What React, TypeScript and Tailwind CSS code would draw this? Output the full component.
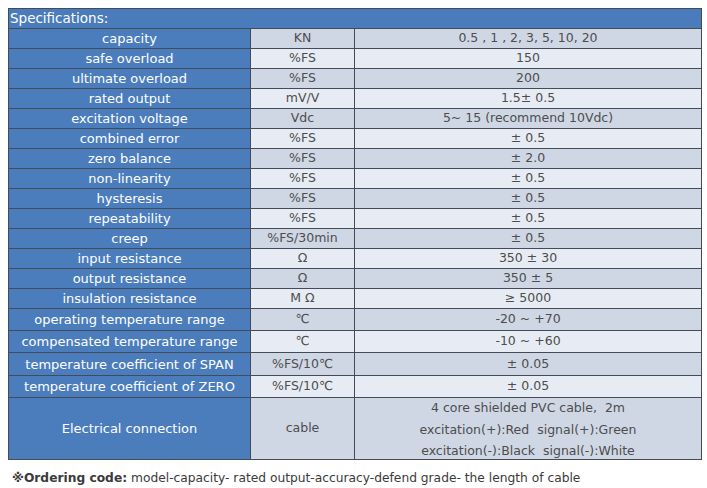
import React from 'react';

type Row = { name: string; unit: string; value: string; h: string; light: boolean };

const rows: Row[] = [
  { name: 'capacity', unit: 'KN', value: '0.5 , 1 , 2, 3, 5, 10, 20', h: 'h-[19px]', light: false },
  { name: 'safe overload', unit: '%FS', value: '150', h: 'h-[19px]', light: true },
  { name: 'ultimate overload', unit: '%FS', value: '200', h: 'h-[19px]', light: false },
  { name: 'rated output', unit: 'mV/V', value: '1.5± 0.5', h: 'h-[19px]', light: true },
  { name: 'excitation voltage', unit: 'Vdc', value: '5~ 15 (recommend 10Vdc)', h: 'h-[19px]', light: false },
  { name: 'combined error', unit: '%FS', value: '± 0.5', h: 'h-[19px]', light: true },
  { name: 'zero balance', unit: '%FS', value: '± 2.0', h: 'h-[19px]', light: false },
  { name: 'non-linearity', unit: '%FS', value: '± 0.5', h: 'h-[19px]', light: true },
  { name: 'hysteresis', unit: '%FS', value: '± 0.5', h: 'h-[19px]', light: false },
  { name: 'repeatability', unit: '%FS', value: '± 0.5', h: 'h-[19px]', light: true },
  { name: 'creep', unit: '%FS/30min', value: '± 0.5', h: 'h-[19px]', light: false },
  { name: 'input resistance', unit: 'Ω', value: '350 ± 30', h: 'h-[19px]', light: true },
  { name: 'output resistance', unit: 'Ω', value: '350 ± 5', h: 'h-[19px]', light: false },
  { name: 'insulation resistance', unit: 'M Ω', value: '≥ 5000', h: 'h-[19px]', light: true },
  { name: 'operating temperature range', unit: '℃', value: '-20 ~ +70', h: 'h-[21px]', light: false },
  { name: 'compensated temperature range', unit: '℃', value: '-10 ~ +60', h: 'h-[21px]', light: true },
  { name: 'temperature coefficient of SPAN', unit: '%FS/10℃', value: '± 0.05', h: 'h-[22px]', light: false },
  { name: 'temperature coefficient of ZERO', unit: '%FS/10℃', value: '± 0.05', h: 'h-[21px]', light: true },
];

export default function App() {
  return (
    <div
      className="w-[707px] h-[488px] bg-white pt-2 pl-2"
      style={{ fontFamily: '"DejaVu Sans", Verdana, sans-serif' }}
    >
      <div className="grid grid-cols-[241px_103px_346px] gap-px p-px bg-[#434b59] w-[694px] text-[12.5px] leading-none">
        <div className="col-span-3 h-[19px] bg-[#4a7cbc] text-white text-[13.5px] flex items-center pl-px">
          Specifications:
        </div>
        {rows.map(r => (
          <React.Fragment key={r.name}>
            <div className={`${r.h} bg-[#4b7dbd] text-white text-[13px] flex items-center justify-center`}>{r.name}</div>
            <div className={`${r.h} ${r.light ? 'bg-[#e7ecf4]' : 'bg-[#cfd7e5]'} text-[#4d4d4d] flex items-center justify-center`}>
              {r.unit}
            </div>
            <div className={`${r.h} ${r.light ? 'bg-[#e7ecf4]' : 'bg-[#cfd7e5]'} text-[#4d4d4d] flex items-center justify-center`}>
              {r.value}
            </div>
          </React.Fragment>
        ))}
        <div className="h-[61px] bg-[#4b7dbd] text-white text-[13px] flex items-center justify-center">Electrical connection</div>
        <div className="h-[61px] bg-[#cfd7e5] text-[#4d4d4d] flex items-center justify-center">cable</div>
        <div className="h-[61px] bg-[#cfd7e5] text-[#4d4d4d] flex flex-col items-center justify-center gap-[9px] pt-[3px]">
          <span>4 core shielded PVC cable,&nbsp; 2m</span>
          <span>excitation(+):Red&nbsp; signal(+):Green</span>
          <span>excitation(-):Black&nbsp; signal(-):White</span>
        </div>
      </div>
      <div className="mt-[9px] pl-[4px] text-[12.25px] text-[#3a3a3a]">
        <span className="font-bold">※Ordering code:</span> model-capacity- rated output-accuracy-defend grade- the length of cable
      </div>
    </div>
  );
}
